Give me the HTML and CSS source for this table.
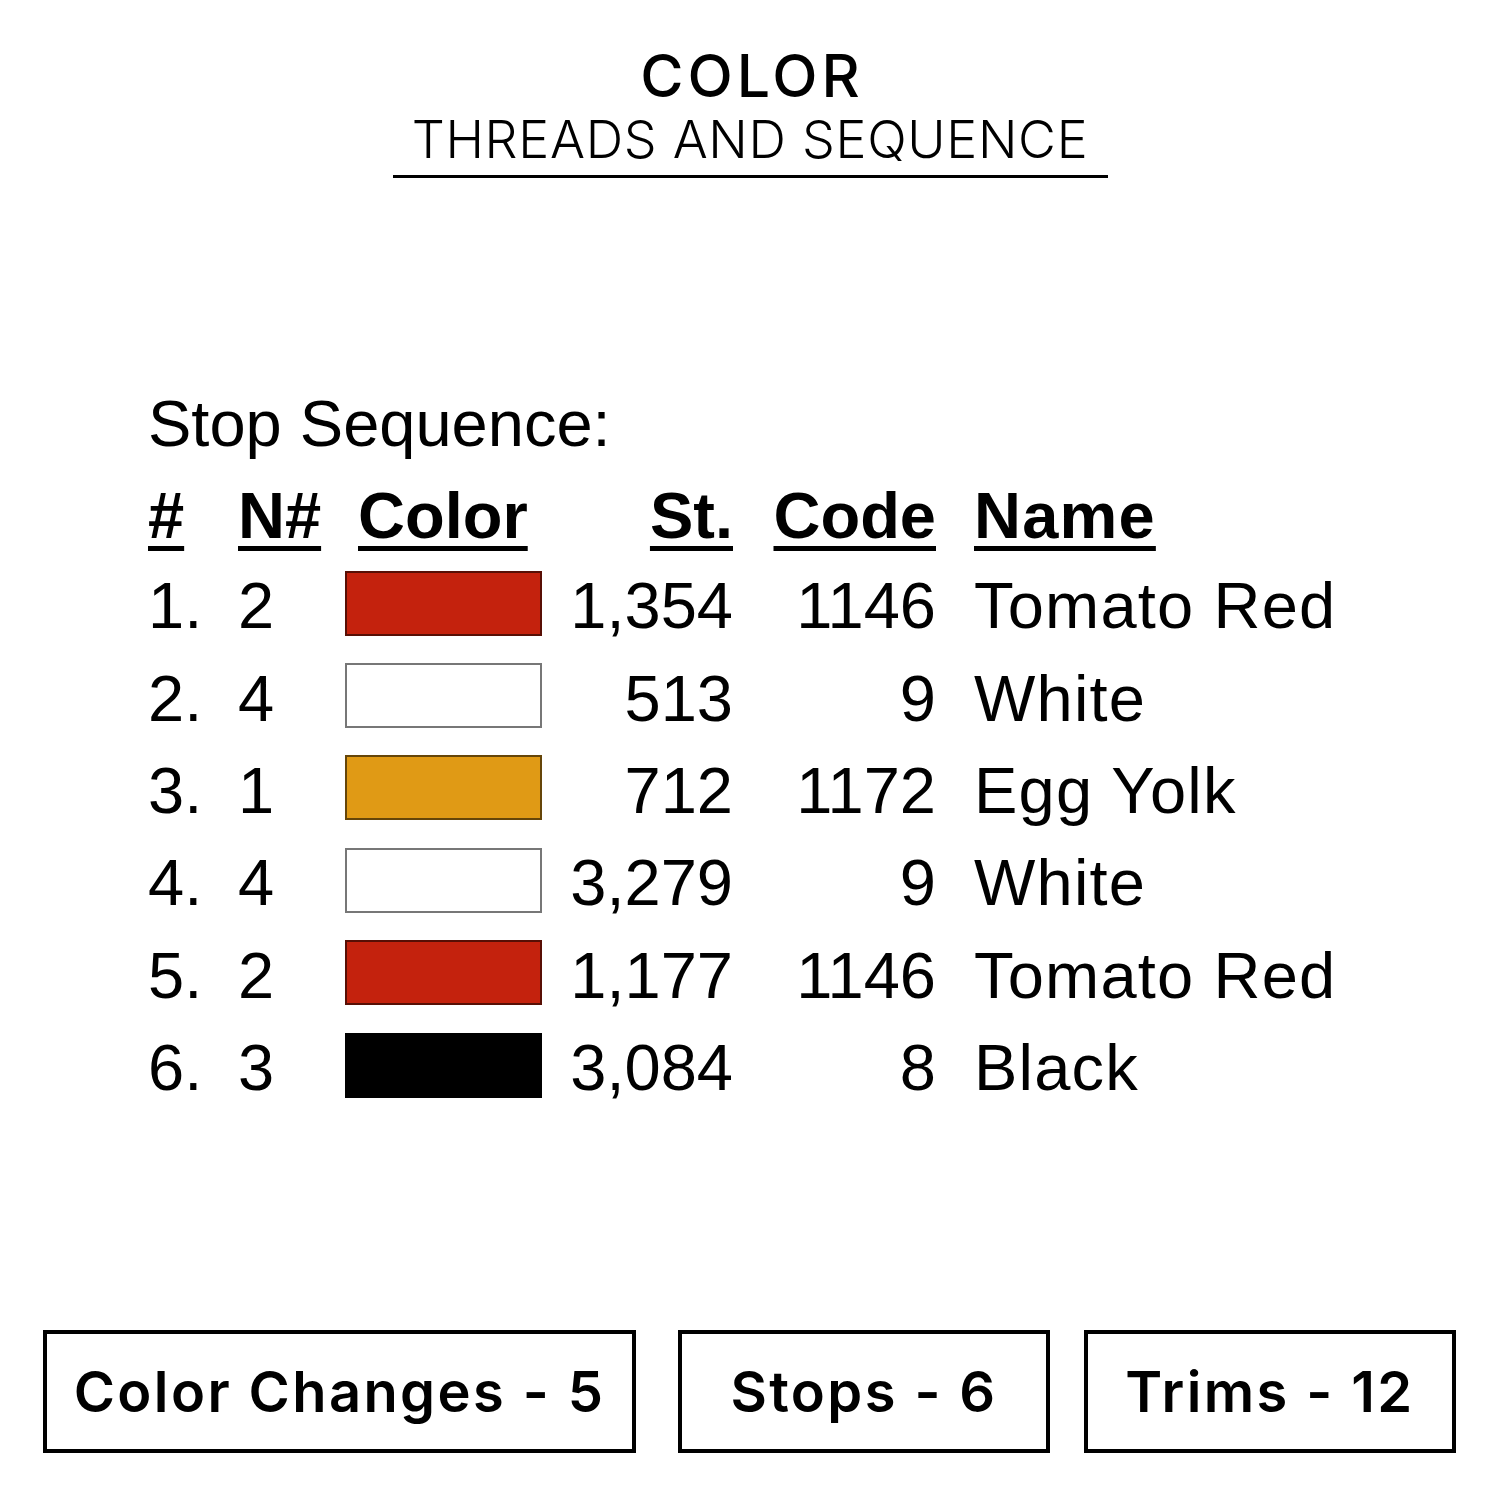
FILE: index.html
```html
<!DOCTYPE html>
<html>
<head>
<meta charset="utf-8">
<link rel="stylesheet" href="styles.css">
</head>
<body>
<div class="page">
  <header class="title">
    <div class="title-main">COLOR</div>
    <div class="title-sub">THREADS AND SEQUENCE</div>
    <div class="title-rule"></div>
  </header>

  <section class="seq">
    <div class="seq-head">Stop Sequence:</div>
    <div class="grid">
      <div class="h"><span>#</span></div>
      <div class="h"><span>N#</span></div>
      <div class="h h-color"><span>Color</span></div>
      <div class="h r"><span>St.</span></div>
      <div class="h r"><span>Code</span></div>
      <div class="h name"><span>Name</span></div>

      <div class="c">1.</div><div class="c">2</div><div class="c sw-cell"><div class="sw red"></div></div><div class="c r">1,354</div><div class="c r">1146</div><div class="c name">Tomato Red</div>
      <div class="c">2.</div><div class="c">4</div><div class="c sw-cell"><div class="sw white"></div></div><div class="c r">513</div><div class="c r">9</div><div class="c name">White</div>
      <div class="c">3.</div><div class="c">1</div><div class="c sw-cell"><div class="sw yolk"></div></div><div class="c r">712</div><div class="c r">1172</div><div class="c name">Egg Yolk</div>
      <div class="c">4.</div><div class="c">4</div><div class="c sw-cell"><div class="sw white"></div></div><div class="c r">3,279</div><div class="c r">9</div><div class="c name">White</div>
      <div class="c">5.</div><div class="c">2</div><div class="c sw-cell"><div class="sw red"></div></div><div class="c r">1,177</div><div class="c r">1146</div><div class="c name">Tomato Red</div>
      <div class="c">6.</div><div class="c">3</div><div class="c sw-cell"><div class="sw black"></div></div><div class="c r">3,084</div><div class="c r">8</div><div class="c name">Black</div>
    </div>
  </section>

  <footer class="stats">
    <div class="stat stat-wide">Color Changes - 5</div>
    <div class="stat stat-2">Stops - 6</div>
    <div class="stat stat-3">Trims - 12</div>
  </footer>
</div>
</body>
</html>
```

FILE: styles.css
```css
html, body {
  margin: 0;
  padding: 0;
  background: #ffffff;
}
.page {
  width: 1500px;
  height: 1500px;
  display: flex;
  flex-direction: column;
  color: #000;
}
.title {
  display: flex;
  flex-direction: column;
  align-items: center;
  padding-top: 40px;
  font-family: Inter, "Open Sans", sans-serif;
}
.title-main {
  font-size: 59px;
  font-weight: 500;
  line-height: 72px;
  letter-spacing: 4px;
  padding-left: 4px;
}
.title-sub {
  font-size: 52px;
  font-weight: 300;
  line-height: 56px;
  letter-spacing: 0.7px;
}
.title-rule {
  width: 715px;
  height: 3px;
  background: #000;
  margin-top: 7px;
}
.seq {
  padding-left: 148px;
  padding-top: 200px;
  font-family: "Liberation Sans", Arial, sans-serif;
  font-size: 65px;
}
.seq-head {
  line-height: 92px;
  margin-bottom: 2px;
}
.grid {
  display: grid;
  grid-template-columns: 90px 107px 197px 191px 203px auto;
  grid-auto-rows: 92.4px;
  grid-template-rows: 88px;
  align-items: center;
}
.h {
  font-weight: bold;
  line-height: 88px;
}
.h span {
  text-decoration: underline;
  text-decoration-thickness: 5px;
  text-underline-offset: 8px;
  text-decoration-skip-ink: none;
}
.h-color {
  padding-left: 13px;
}
.c {
  line-height: 92px;
}
.r {
  text-align: right;
}
.name {
  padding-left: 38px;
  white-space: nowrap;
  letter-spacing: 1.2px;
}
.sw-cell {
  display: flex;
  align-items: center;
  height: 92px;
}
.sw {
  width: 197px;
  height: 65px;
  box-sizing: border-box;
  border: 2px solid rgba(0,0,0,0.55);
  margin-top: -6px;
}
.red { background: #c4220d; }
.white { background: #ffffff; border-color: #777; }
.yolk { background: #e09a15; }
.black { background: #000; }

.stats {
  margin-top: auto;
  margin-bottom: 47px;
  margin-left: 43px;
  display: flex;
  font-family: Inter, "Open Sans", sans-serif;
  font-weight: 600;
  font-size: 56px;
  letter-spacing: 2.4px;
}
.stat {
  height: 123px;
  box-sizing: border-box;
  border: 4px solid #000;
  display: flex;
  align-items: center;
  justify-content: center;
  width: 372px;
}
.stat-wide { width: 593px; }
.stat-2 { margin-left: 42px; }
.stat-3 { margin-left: 34px; }
```
